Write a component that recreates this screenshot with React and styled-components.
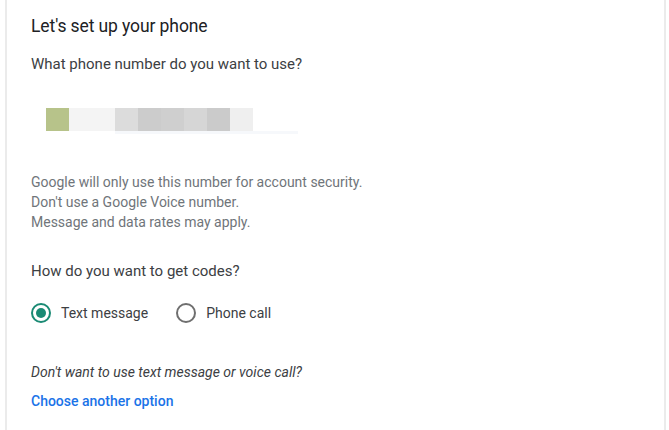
import React from "react";
import styled, { createGlobalStyle } from "styled-components";

const GlobalStyle = createGlobalStyle`
  html, body {
    margin: 0;
    padding: 0;
    background: #ffffff;
  }
  body {
    font-family: Roboto, "Liberation Sans", Arial, sans-serif;
  }
`;

const Card = styled.div`
  margin: 0 3px 0 5px;
  height: 430px;
  box-sizing: border-box;
  border-left: 2px solid #ebebeb;
  border-right: 2px solid #ebebeb;
  padding: 14px 24px 0 24px;
  display: flex;
  flex-direction: column;
`;

const Title = styled.h1`
  margin: 0;
  font-size: 17.5px;
  font-weight: 400;
  line-height: 24px;
  letter-spacing: -0.1px;
  color: #202124;
`;

const Question = styled.p`
  margin: ${(p) => p.top}px 0 0;
  font-size: 15px;
  line-height: 20px;
  color: #3c4043;
`;

const PhoneField = styled.div`
  margin: 34px 0 0 15px;
  width: 252px;
  display: flex;
  flex-direction: column;
`;

const Blocks = styled.div`
  display: flex;
`;

const Block = styled.div`
  width: 23px;
  height: 23px;
  background: ${(p) => p.color};
`;

const Underline = styled.div`
  margin-left: 69px;
  width: 183px;
  height: 3px;
  background: #f6f8fb;
`;

const Notice = styled.p`
  margin: 38px 0 0;
  font-size: 14px;
  line-height: 20px;
  color: #70757a;
`;

const RadioRow = styled.div`
  margin-top: 22px;
  display: flex;
  align-items: center;
  gap: 28px;
`;

const RadioOption = styled.label`
  display: flex;
  align-items: center;
  gap: 10px;
  font-size: 14px;
  color: #3c4043;
`;

const RadioCircle = styled.span`
  width: 16px;
  height: 16px;
  border-radius: 50%;
  border: 2px solid ${(p) => (p.checked ? "#1a8a74" : "#6f6f6f")};
  display: flex;
  align-items: center;
  justify-content: center;
  flex-shrink: 0;
  &::after {
    content: "";
    width: 10px;
    height: 10px;
    border-radius: 50%;
    background: ${(p) => (p.checked ? "#1a8a74" : "transparent")};
  }
`;

const Alternative = styled.p`
  margin: 40px 0 0;
  font-size: 14px;
  line-height: 18px;
  font-style: italic;
  color: #3c4043;
`;

const OptionLink = styled.a`
  margin-top: 11px;
  font-size: 14px;
  line-height: 18px;
  font-weight: 500;
  color: #1a73e8;
  text-decoration: none;
`;

const blockColors = [
  "#b7c38a",
  "#f4f4f4",
  "#f4f4f4",
  "#dcdcdc",
  "#cccccc",
  "#cfcfcf",
  "#d6d6d6",
  "#cbcbcb",
  "#efefef",
];

export default function App() {
  return (
    <>
      <GlobalStyle />
      <Card>
        <Title>Let's set up your phone</Title>
        <Question top={16}>What phone number do you want to use?</Question>
        <PhoneField>
          <Blocks>
            {blockColors.map((c, i) => (
              <Block key={i} color={c} />
            ))}
          </Blocks>
          <Underline />
        </PhoneField>
        <Notice>
          Google will only use this number for account security.
          <br />
          Don't use a Google Voice number.
          <br />
          Message and data rates may apply.
        </Notice>
        <Question top={29}>How do you want to get codes?</Question>
        <RadioRow>
          <RadioOption>
            <RadioCircle checked />
            Text message
          </RadioOption>
          <RadioOption>
            <RadioCircle />
            Phone call
          </RadioOption>
        </RadioRow>
        <Alternative>Don't want to use text message or voice call?</Alternative>
        <OptionLink href="#">Choose another option</OptionLink>
      </Card>
    </>
  );
}
